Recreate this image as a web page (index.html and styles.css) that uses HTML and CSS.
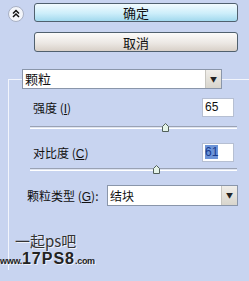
FILE: index.html
```html
<!DOCTYPE html>
<html lang="zh">
<head>
    <meta charset="UTF-8">
    <title>颗粒</title>
    <link rel="stylesheet" href="styles.css">
</head>
<body>
    <div class="panel">
        <div class="row-ok">
            <span class="collapse">
                <svg width="16" height="16" viewBox="0 0 16 16">
                    <circle cx="8" cy="8" r="7.5" fill="#f3f5fa" stroke="#a8b0c4"/>
                    <polyline points="5,7.5 8,4.5 11,7.5" fill="none" stroke="#111" stroke-width="1.5"/>
                    <polyline points="5,11 8,8 11,11" fill="none" stroke="#111" stroke-width="1.5"/>
                </svg>
            </span>
            <button class="btn btn-ok">确定</button>
        </div>
        <button class="btn btn-cancel">取消</button>

        <fieldset class="group">
            <legend class="select legend-select">
                <span class="select-text">颗粒</span>
                <span class="select-arrow">▼</span>
            </legend>

            <div class="field first">
                <span class="label">强度 (<u>I</u>)</span>
                <span class="num">65</span>
            </div>
            <div class="slider s1">
                <div class="track"></div>
                <svg class="thumb" style="left: 65%" width="7" height="9" viewBox="0 0 7 9">
                    <path d="M0.5,3.5 L3.5,0.5 L6.5,3.5 L6.5,8.5 L0.5,8.5 Z" fill="#e4f3e8" stroke="#52605a"/>
                </svg>
            </div>

            <div class="field second">
                <span class="label">对比度 (<u>C</u>)</span>
                <span class="num"><span class="sel">61</span></span>
            </div>
            <div class="slider s2">
                <div class="track"></div>
                <svg class="thumb" style="left: 61%" width="7" height="9" viewBox="0 0 7 9">
                    <path d="M0.5,3.5 L3.5,0.5 L6.5,3.5 L6.5,8.5 L0.5,8.5 Z" fill="#e4f3e8" stroke="#52605a"/>
                </svg>
            </div>

            <div class="field type">
                <span class="label">颗粒类型 (<u>G</u>):</span>
                <span class="select type-select">
                    <span class="select-text">结块</span>
                    <span class="select-arrow">▼</span>
                </span>
            </div>
        </fieldset>

        <div class="watermark">
            <div class="wm-top">一起ps吧</div>
            <div class="wm-url"><small>www.</small><b>17PS8</b><small>.com</small></div>
        </div>
    </div>
</body>
</html>
```

FILE: styles.css
```css
body {
    margin: 0;
    background: #c8d4f0;
    font-family: "Noto Sans CJK SC", "Liberation Sans", sans-serif;
    font-size: 12px;
    color: #111;
}
.panel {
    position: relative;
    width: 249px;
    height: 281px;
    padding-top: 3px;
    box-sizing: border-box;
    overflow: hidden;
}
.row-ok {
    display: flex;
    align-items: center;
    height: 19px;
}
.collapse {
    margin-left: 8px;
    width: 16px;
    height: 16px;
    margin-top: 3px;
}
.collapse svg {
    display: block;
}
.btn {
    display: flex;
    align-items: center;
    justify-content: center;
    width: 204px;
    padding: 0;
    font-family: "Noto Sans CJK SC", sans-serif;
    font-size: 13px;
    color: #111;
    border: 1px solid #50606e;
    border-radius: 3px;
}
.btn-ok {
    margin-left: 10px;
    height: 19px;
    background: linear-gradient(#f2fbff, #cdeefa 55%, #a2d9ee);
}
.btn-cancel {
    margin: 10px 0 0 34px;
    height: 20px;
    background: linear-gradient(#fcfbfa, #ece8e4 55%, #d8d0c8);
}

.group {
    margin: 17px 0 0 8px;
    padding: 0;
    min-width: 0;
    border: none;
    border-top: 1px solid #f2f5fc;
    border-left: 1px solid #f2f5fc;
    height: 200px;
}
.select {
    display: flex;
    box-sizing: border-box;
    background: #fff;
    border: 1px solid #8a96aa;
}
.legend-select {
    margin-left: 13px;
    padding: 0;
    width: 200px;
    height: 20px;
}
.select-text {
    flex: 1;
    padding-left: 2px;
    font-size: 13px;
    line-height: 18px;
}
.select-arrow {
    width: 15px;
    background: linear-gradient(#f0eee9, #d8d5cd);
    border-left: 1px solid #c8c6c0;
    font-size: 7px;
    line-height: 18px;
    text-align: center;
    color: #222;
}

.field {
    display: flex;
    align-items: center;
    justify-content: space-between;
    height: 19px;
    margin-right: 15px;
    padding-left: 24px;
}
.field.first {
    margin-top: 9px;
}
.field.second {
    margin-top: 11px;
}
.field.type {
    margin-top: 11px;
    height: 21px;
    padding-left: 18px;
    margin-right: 11px;
}
.label u {
    text-decoration: underline;
    font-family: "Liberation Sans", sans-serif;
}
.num {
    box-sizing: border-box;
    width: 32px;
    height: 19px;
    padding-left: 2px;
    background: #fff;
    border: 1px solid #b6bfd2;
    font-family: "Liberation Sans", sans-serif;
    font-size: 12px;
    line-height: 17px;
}
.sel {
    background: #6d94d8;
    color: #183a8c;
}
.type-select {
    width: 131px;
    height: 21px;
}
.type-select .select-text {
    font-size: 12px;
    line-height: 19px;
}
.type-select .select-arrow {
    line-height: 19px;
}

.slider {
    position: relative;
    height: 9px;
    margin: 6px 12px 0 21px;
}
.slider.s2 {
    margin-top: 3px;
}
.track {
    position: absolute;
    left: 0;
    right: 0;
    top: 3px;
    height: 1px;
    border-top: 1px solid #9aa2b4;
    border-bottom: 1px solid #fff;
    background: #dde3f0;
}
.thumb {
    position: absolute;
    top: 0;
    margin-left: -3px;
}

.watermark {
    position: absolute;
    left: 0;
    top: 231px;
    color: #222;
    text-shadow: 1px 1px 0 #eef1fa;
}
.wm-top {
    margin-left: 15px;
    height: 19px;
    font-size: 15px;
    line-height: 19px;
    color: #333;
}
.wm-url {
    margin-top: 2px;
    height: 13px;
    font-family: "Liberation Sans", sans-serif;
    font-weight: bold;
    line-height: 13px;
    letter-spacing: -0.3px;
}
.wm-url small {
    font-size: 9px;
}
.wm-url b {
    font-size: 16px;
    letter-spacing: 1px;
}
```
